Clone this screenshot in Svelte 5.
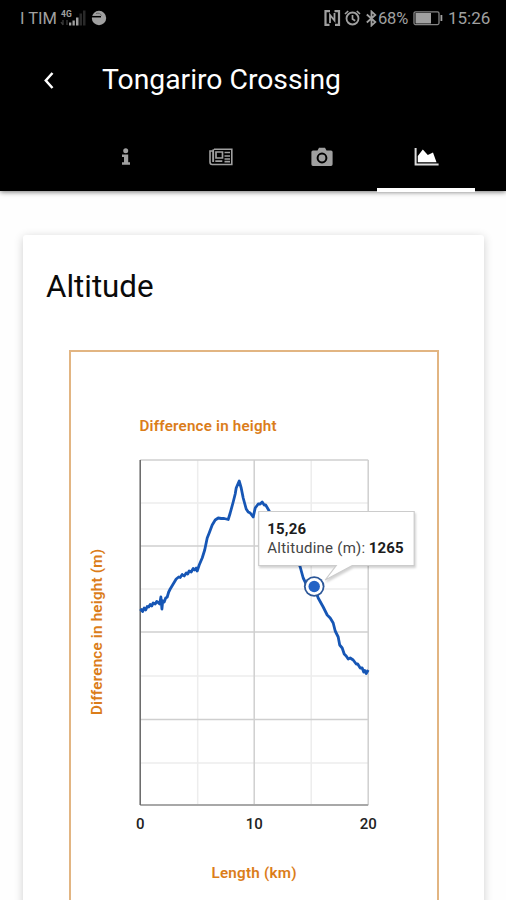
<script>
    const tabs = ['info', 'news', 'photos', 'graph'];
    let active = 'graph';

    // plot area, 20 km wide
    const plot = { width: 228, height: 345 };
    const majorY = [0, 86, 172, 259.5];
    const minorY = [43, 129, 216, 303];
    const majorX = [114, 228];
    const minorX = [57.5, 171];
    const xLabels = [
        { x: 0, text: '0' },
        { x: 114, text: '10' },
        { x: 228, text: '20' }
    ];

    const altitude = [
        [0, 151], [1.5, 149.5], [2.5, 151.5], [4, 148], [5.5, 150], [7, 146.5], [8.5, 147], [10, 144.5],
        [11.5, 146], [13, 143], [15, 144], [16.5, 141.5], [18, 142.5], [19.5, 144], [20.7, 137],
        [21.7, 149], [22.5, 141], [24, 142], [25.5, 138], [27, 137], [28.5, 132], [30, 129], [33, 124], [36, 119],
        [38.5, 117], [40, 117.5], [42, 114.5], [44, 116], [46, 113], [47.5, 114], [49, 111], [51, 112],
        [53, 108.5], [54.5, 110], [56, 108], [57, 111], [59, 105], [62, 98], [64.5, 90], [67, 78], [69, 73],
        [72, 65], [75, 60], [78, 58], [81, 58.5], [84, 58.5], [88, 59.5], [90, 53], [93, 42], [95, 34],
        [96, 28], [99, 21], [101, 28], [103, 38], [106, 49], [108, 52], [110, 53], [113, 57], [115, 48],
        [118, 44], [120, 44], [122, 42], [124, 45], [125.5, 45], [129, 51], [143, 72], [153, 89],
        [160, 107], [163, 118], [166, 124], [174, 127], [178, 138], [183, 147], [187, 155], [190, 158],
        [193, 163], [195, 171], [198, 177], [199.5, 185], [202, 188], [204, 194], [206, 196], [208, 199],
        [210, 198], [213, 200], [216, 204], [217.5, 204], [220, 208], [222, 208], [223.5, 212],
        [224.5, 210.5], [226, 213.5], [228, 210]
    ];
    const line = altitude.map((p) => p.join(',')).join(' ');
</script>

<div class="app">
    <header>
        <div class="status">
            <div class="status-left">
                <span>I TIM</span>
                <svg class="signal" width="27" height="18" viewBox="0 0 27 18">
                    <text x="1" y="7.5" font-size="8.5" font-weight="bold">4G</text>
                    <path d="M3 11v5M1 13l2 3M7 16v-5" stroke="#3c3c3c" stroke-width="1.3" fill="none" />
                    <path d="M9 13.5h2.3v3H9zM12.5 11.5h2.3v5h-2.3zM16 8.5h2.5v8H16z" />
                    <path d="M19.5 4.5H22v12h-2.5zM23 1.5h2.5v15H23z" fill="#292929" />
                </svg>
                <svg class="globe" width="16" height="16" viewBox="0 0 16 16">
                    <circle cx="8" cy="8" r="7.2" />
                    <path d="M0 6.7h10" stroke="#000" stroke-width="1.5" />
                    <path d="M5 3.6q4-1.3 5.5 2" stroke="#666" fill="none" />
                </svg>
            </div>
            <div class="status-right">
                <svg width="17" height="16" viewBox="0 0 17 16">
                    <path d="M6 1.2H1.5v13.6H5.5M10.5 1.2h4.5v13.6H11" fill="none" stroke="#a0a0a0" stroke-width="2.2" />
                    <path d="M6 13V5l4.5 5.5V3" fill="none" stroke="#a0a0a0" stroke-width="1.8" />
                </svg>
                <svg class="alarm" width="17" height="16" viewBox="0 0 17 16">
                    <circle cx="8.5" cy="8.5" r="6" fill="none" stroke="#a0a0a0" stroke-width="1.8" />
                    <path d="M8.5 5v4l2.7 1.8M1 4l3.2-3M16 4l-3.2-3" fill="none" stroke="#a0a0a0" stroke-width="1.7" />
                </svg>
                <svg class="bluetooth" width="12" height="17" viewBox="0 0 12 17">
                    <path d="M.8 4.5l8.5 7.6L5.5 15.5v-14l3.8 3.4L.8 12.5" fill="none" stroke="#a0a0a0" stroke-width="1.8" />
                </svg>
                <span class="percent">68%</span>
                <svg class="battery" width="30" height="16" viewBox="0 0 30 16">
                    <rect x="1" y="1.8" width="25" height="12.8" rx="1.5" fill="none" stroke="#858585" stroke-width="1.3" />
                    <path d="M2.5 3H18v10.5H2.5z" />
                    <path d="M27.5 5h1.8v6h-1.8z" />
                </svg>
                <span class="clock">15:26</span>
            </div>
        </div>

        <div class="toolbar">
            <svg class="back" width="12" height="18" viewBox="0 0 12 18">
                <path d="M9.5 2L2.8 9.5l6.7 7.5" fill="none" stroke="#fff" stroke-width="2.5" />
            </svg>
            <h1>Tongariro Crossing</h1>
        </div>

        <nav>
            {#each tabs as tab}
                <button class="tab {tab}" class:active={tab === active} aria-label={tab} on:click={() => (active = tab)}>
                    {#if tab === 'info'}
                        <svg width="10" height="18" viewBox="0 0 10 18">
                            <circle cx="4.7" cy="2.8" r="2.5" />
                            <path d="M1 6.5h6.2v7.8H9v2.5H1v-2.5h2V9H1z" />
                        </svg>
                    {:else if tab === 'news'}
                        <svg width="24" height="18" viewBox="0 0 24 18">
                            <path d="M5 1.2h17.8v15.3H3.2Q1 16.5 1 14V3h3v11M4.3 14V1.2" fill="none" stroke="#a0a0a0" stroke-width="1.6" />
                            <path d="M7 4h6.5v6H7zM15.5 4.5H21M15.5 8H21M15.5 11H21M6.3 13.2h7M15.5 13.7H21" fill="none" stroke="#a0a0a0" stroke-width="1.7" />
                        </svg>
                    {:else if tab === 'photos'}
                        <svg width="22" height="20" viewBox="0 0 22 20">
                            <path d="M2 3.5h4.5L8 .8h6l1.5 2.7H20Q21.6 3.5 21.6 5v12.3q0 1.7-1.6 1.7H2Q.4 19 .4 17.3V5Q.4 3.5 2 3.5z" />
                            <circle cx="11" cy="11" r="4.4" fill="#a0a0a0" stroke="#000" stroke-width="2" />
                        </svg>
                    {:else}
                        <svg width="25" height="18" viewBox="0 0 25 18">
                            <path d="M1.6 0v16.4h23" fill="none" stroke="#ddd" stroke-width="2" />
                            <path d="M3.8 14.2V8L8.8 1.5l5 5.5L19 4.5l3.5 9.7z" />
                        </svg>
                    {/if}
                </button>
            {/each}
        </nav>
    </header>

    <main>
        <section class="card">
            <h2>Altitude</h2>
            <div class="chart">
                <svg width="366" height="560" viewBox="0 0 366 560">
                    <text class="axis-title" x="68.5" y="78.7" textLength="137">Difference in height</text>
                    <text class="axis-title" transform="translate(30.7 363) rotate(-90)" textLength="166">Difference in height (m)</text>
                    <text class="axis-title" x="140.5" y="525.7" textLength="85">Length (km)</text>
                    <g transform="translate(69.2 108)">
                        {#each minorY as y}
                            <path class="minor" d="M0 {y}H{plot.width}" />
                        {/each}
                        {#each minorX as x}
                            <path class="minor" d="M{x} 0V{plot.height}" />
                        {/each}
                        {#each majorY as y}
                            <path class="major" d="M0 {y}H{plot.width}" />
                        {/each}
                        {#each majorX as x}
                            <path class="major" d="M{x} 0V{plot.height}" />
                        {/each}
                        <path class="baseline" d="M0 {plot.height}H{plot.width}" />
                        <path class="axis" d="M0 0V{plot.height}" />
                        <polyline class="series" points={line} />
                        {#each xLabels as label}
                            <text class="tick" x={label.x} y="369" text-anchor="middle">{label.text}</text>
                        {/each}

                        <!-- selected point -->
                        <circle cx="174" cy="126.5" r="10.3" fill="#2c5798" />
                        <circle cx="174" cy="126.5" r="8.5" fill="#fff" />
                        <circle cx="174" cy="126.5" r="5.7" fill="#2363c5" />

                        <g class="tooltip">
                            <path d="M118.5 51.5H274V105.5H212L185 120 196 105.5H118.5z" />
                        </g>
                        <text class="tip bold" x="127" y="73.5" textLength="39">15,26</text>
                        <text class="tip" x="127" y="93" textLength="98">Altitudine (m):</text>
                        <text class="tip bold" x="228.5" y="93" textLength="35">1265</text>
                    </g>
                </svg>
            </div>
        </section>
    </main>
</div>

<style>
    :global(body) {
        margin: 0;
        overflow: hidden;
    }

    .app {
        height: 900px;
        overflow: hidden;
        background: #fefefe;
        font-family: Roboto, sans-serif;
        display: flex;
        flex-direction: column;
    }

    svg {
        display: block;
        flex: none;
    }

    header {
        height: 191px;
        flex: none;
        background: #000;
        color: #fff;
        box-shadow: 0 1px 5px rgba(0, 0, 0, 0.55);
    }

    .status {
        display: flex;
        justify-content: space-between;
        height: 36px;
        padding: 0 16px 0 20px;
        color: #a0a0a0;
        fill: #a0a0a0;
        font-size: 16px;
    }

    .status-left,
    .status-right {
        display: flex;
        align-items: center;
    }

    .status-left span {
        width: 40px;
        font-size: 16.5px;
        white-space: nowrap;
    }

    .signal {
        margin-right: 4px;
    }

    .alarm {
        margin: 0 5px 0 3px;
    }

    .percent {
        width: 35px;
        font-size: 16.5px;
        letter-spacing: -0.2px;
    }

    .battery {
        margin-right: 5px;
    }

    .clock {
        width: 42px;
        font-size: 17px;
    }

    .toolbar {
        display: flex;
        align-items: center;
        height: 88px;
        padding-left: 43px;
    }

    h1 {
        margin: 0 0 0 47px;
        font-size: 28.3px;
        font-weight: 400;
        line-height: 36px;
        white-space: nowrap;
    }

    nav {
        display: flex;
        height: 67px;
        padding-left: 76px;
    }

    .tab {
        box-sizing: border-box;
        width: 99px;
        height: 68px;
        padding: 2px 0 0;
        border: 0;
        border-bottom: 4px solid transparent;
        background: none;
        display: flex;
        justify-content: center;
        align-items: center;
        fill: #a0a0a0;
    }

    .news {
        width: 92px;
    }

    .photos {
        width: 110px;
    }

    .graph {
        width: 98px;
    }

    .tab.active {
        border-color: #fff;
        fill: #fff;
    }

    main {
        flex: 1;
        padding: 44px 22px 0 23px;
    }

    .card {
        height: 690px;
        padding: 33px 45px 0 23px;
        background: #fff;
        border-radius: 3px;
        box-shadow: 0 2px 10px rgba(0, 0, 0, 0.19);
    }

    h2 {
        margin: 0;
        font-size: 31.3px;
        line-height: 38px;
        font-weight: 400;
        color: #0a0a0a;
    }

    .chart {
        width: 366px;
        height: 600px;
        margin: 44px 0 0 23px;
        border: 2px solid #e2b582;
    }

    .axis-title {
        fill: #db7d1a;
        font-size: 15.2px;
        font-weight: 600;
    }

    .minor {
        stroke: #ededed;
        stroke-width: 1.5;
    }

    .major {
        stroke: #cfcfcf;
        stroke-width: 1.5;
    }

    .baseline {
        stroke: #a8a8a8;
        stroke-width: 2;
    }

    .axis {
        stroke: #666;
        stroke-width: 1.5;
    }

    .series {
        fill: none;
        stroke: #1656b5;
        stroke-width: 2.8;
        stroke-linejoin: round;
    }

    .tick {
        fill: #222;
        font-size: 15px;
        font-weight: 500;
    }

    .tooltip {
        fill: #fff;
        stroke: #ccc;
        stroke-width: 1.2;
        filter: drop-shadow(1px 2px 1px rgba(0, 0, 0, 0.18));
    }

    .tip {
        fill: #444;
        font-size: 15px;
    }

    .bold {
        fill: #1c1c1c;
        font-weight: 700;
    }
</style>
